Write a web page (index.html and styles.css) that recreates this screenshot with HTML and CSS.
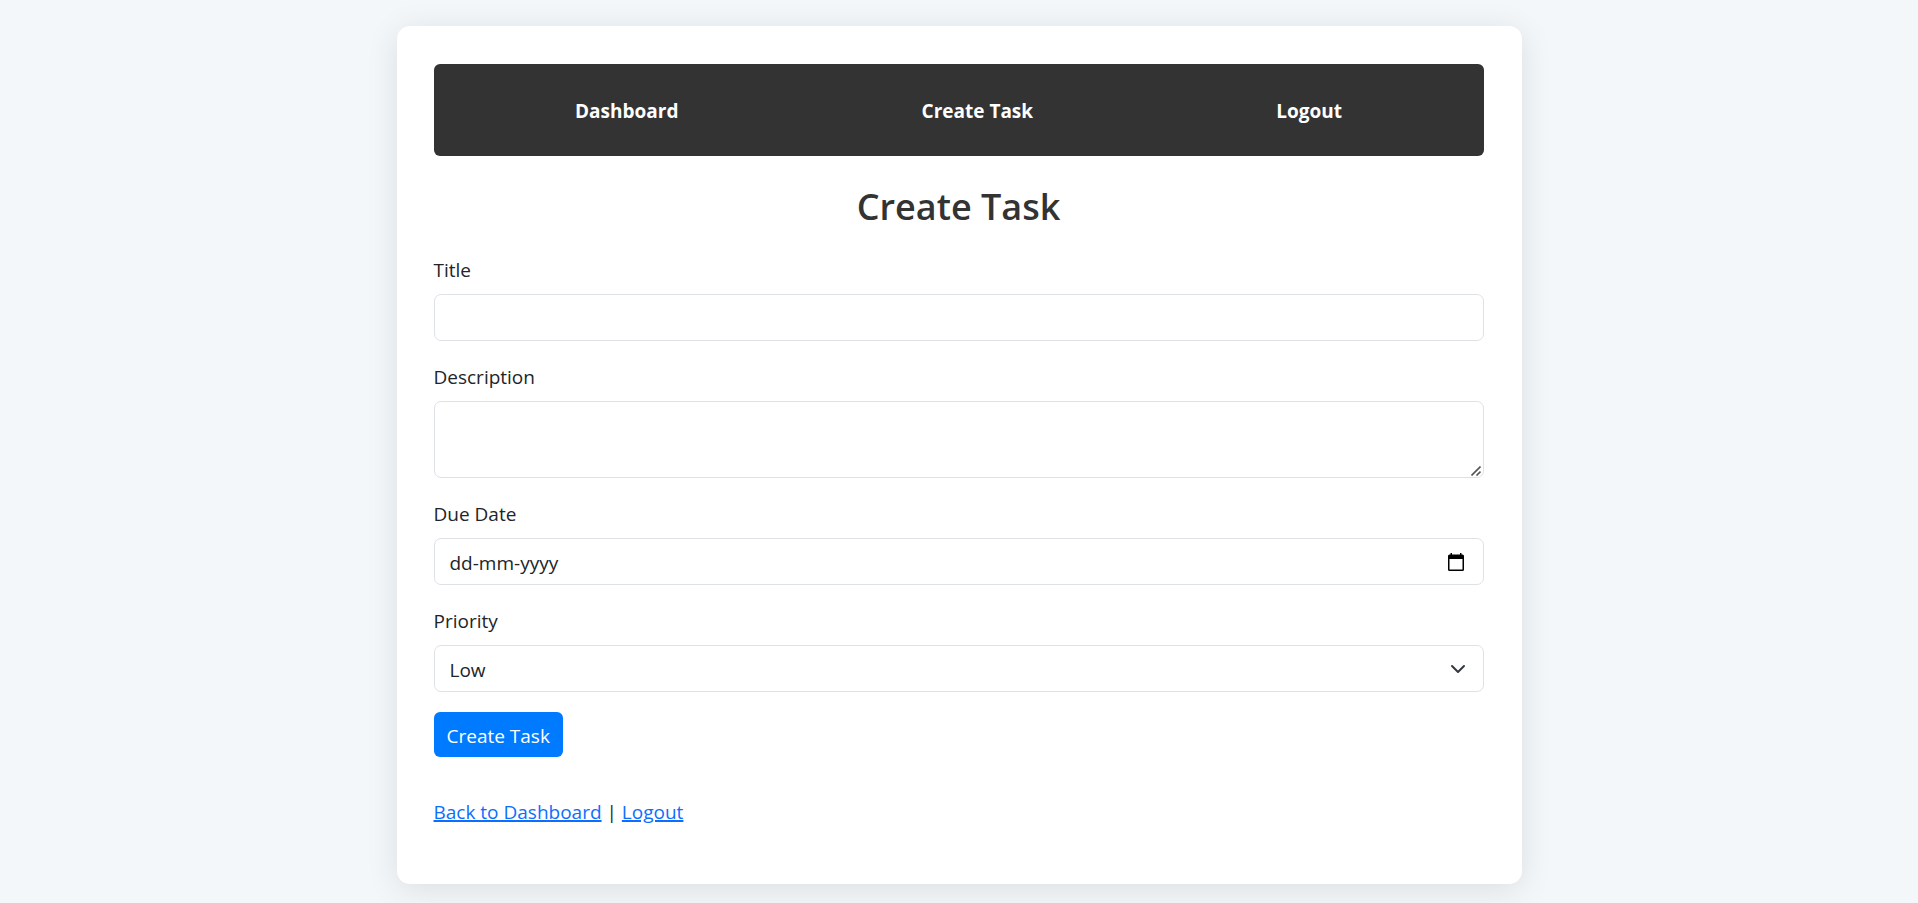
FILE: index.html
```html
<!DOCTYPE html>
<html lang="en">
<head>
  <meta charset="utf-8">
  <meta name="viewport" content="width=device-width, initial-scale=1">
  <title>Create Task</title>
  <link rel="stylesheet" href="styles.css">
</head>
<body>
  <main class="card">
    <nav class="navbar">
      <ul class="nav-list">
        <li><a class="nav-link" href="#dashboard">Dashboard</a></li>
        <li><a class="nav-link" href="#create">Create Task</a></li>
        <li><a class="nav-link" href="#logout">Logout</a></li>
      </ul>
    </nav>

    <h1 class="title">Create Task</h1>

    <form class="form">
      <div class="field">
        <label class="label" for="title">Title</label>
        <input class="control" type="text" id="title" name="title">
      </div>
      <div class="field">
        <label class="label" for="description">Description</label>
        <div class="overlay-box">
          <textarea class="control control-area" id="description" name="description" rows="2"></textarea>
          <svg class="resize-icon" viewBox="0 0 10 10" aria-hidden="true">
            <path fill="none" stroke="currentColor" stroke-width="1.600" d="M.5 9.500l9-9M5.500 9.500l4-4"/>
          </svg>
        </div>
      </div>
      <div class="field">
        <label class="label" for="due-date">Due Date</label>
        <div class="control date-box">
          <input class="date-input" type="text" id="due-date" name="due_date" placeholder="dd-mm-yyyy">
          <button class="date-button" type="button" aria-label="Show date picker">
            <svg class="date-icon" viewBox="0 0 16 18" aria-hidden="true">
              <path fill="currentColor" fill-rule="evenodd" d="M2.500 0H4v1.500h8V0h1.500v1.500H14.500A1.500 1.500 0 0 1 16 3v13.500a1.500 1.500 0 0 1-1.500 1.500h-13A1.500 1.500 0 0 1 0 16.500V3a1.500 1.500 0 0 1 1.500-1.500h1zM1.500 6v10.500h13V6z"/>
            </svg>
          </button>
        </div>
      </div>
      <div class="field">
        <label class="label" for="priority">Priority</label>
        <div class="overlay-box">
          <select class="control control-select" id="priority" name="priority">
            <option>Low</option>
            <option>Medium</option>
            <option>High</option>
          </select>
          <svg class="select-icon" viewBox="0 0 16 16" aria-hidden="true">
            <path fill="none" stroke="currentColor" stroke-linecap="round" stroke-linejoin="round" stroke-width="2" d="m2 5 6 6 6-6"/>
          </svg>
        </div>
      </div>
      <button class="submit" type="submit">Create Task</button>
    </form>

    <p class="links"><a class="link" href="#dashboard">Back to Dashboard</a> | <a class="link" href="#logout">Logout</a></p>
  </main>
</body>
</html>
```
FILE: styles.css
```css
*,
*::before,
*::after {
  box-sizing: border-box;
}

body {
  margin: 0;
  padding: 26px 20px 19px;
  background: #f3f7fa;
  color: #212529;
  font-family: "Segoe UI", "Open Sans", "Noto Sans", sans-serif;
  font-size: 19px;
  line-height: 30px;
}

.card {
  max-width: 1125px;
  margin: 0 auto;
  padding: 38px 38px 37px 37px;
  border-radius: 13px;
  background: #fff;
  box-shadow: 0 5px 32px rgba(0, 0, 0, 0.1);
}

.navbar {
  padding: 32px 20px 30px;
  border-radius: 6px;
  background: #333;
}

.nav-list {
  display: flex;
  justify-content: space-around;
  margin: 0;
  padding: 0;
  list-style: none;
}

.nav-link {
  color: #fff;
  font-weight: 700;
  text-decoration: none;
}

.title {
  margin: 27px 0 23px;
  color: #333;
  font-size: 36px;
  font-weight: 600;
  line-height: 48px;
  text-align: center;
}

.field {
  margin-bottom: 20px;
}

.label {
  display: block;
  margin-bottom: 8px;
  line-height: 32px;
}

.control {
  display: block;
  width: 100%;
  height: 47px;
  padding: 2px 15px 0;
  border: 1px solid #dee2e6;
  border-radius: 7px;
  background: #fff;
  color: inherit;
  font: inherit;
}

.overlay-box {
  position: relative;
}

.control-area {
  height: 77px;
  padding: 7px 15px;
  resize: vertical;
}

.control-area::-webkit-resizer {
  background: transparent;
}

.resize-icon {
  position: absolute;
  right: 3px;
  bottom: 2px;
  width: 10px;
  height: 10px;
  color: #555;
  pointer-events: none;
}

.date-box {
  display: flex;
  align-items: center;
}

.date-input {
  flex: 1;
  min-width: 0;
  padding: 0;
  border: 0;
  outline: 0;
  background: none;
  color: inherit;
  font: inherit;
}

.date-input::placeholder {
  color: inherit;
  opacity: 1;
}

.date-button {
  display: flex;
  padding: 0 4px 2px;
  border: 0;
  background: none;
  color: #000;
}

.date-icon {
  width: 16px;
  height: 18px;
}

.control-select {
  appearance: none;
}

.select-icon {
  position: absolute;
  top: 16px;
  right: 18px;
  width: 16px;
  height: 16px;
  color: #343a40;
  pointer-events: none;
}

.submit {
  display: block;
  height: 45px;
  padding: 2px 13px 0;
  border: 0;
  border-radius: 6px;
  background: #007bff;
  color: #fff;
  font: inherit;
}

.links {
  margin: 40px 0 20px;
}

.link {
  color: #0d6efd;
  text-decoration-thickness: 2px;
}
```
